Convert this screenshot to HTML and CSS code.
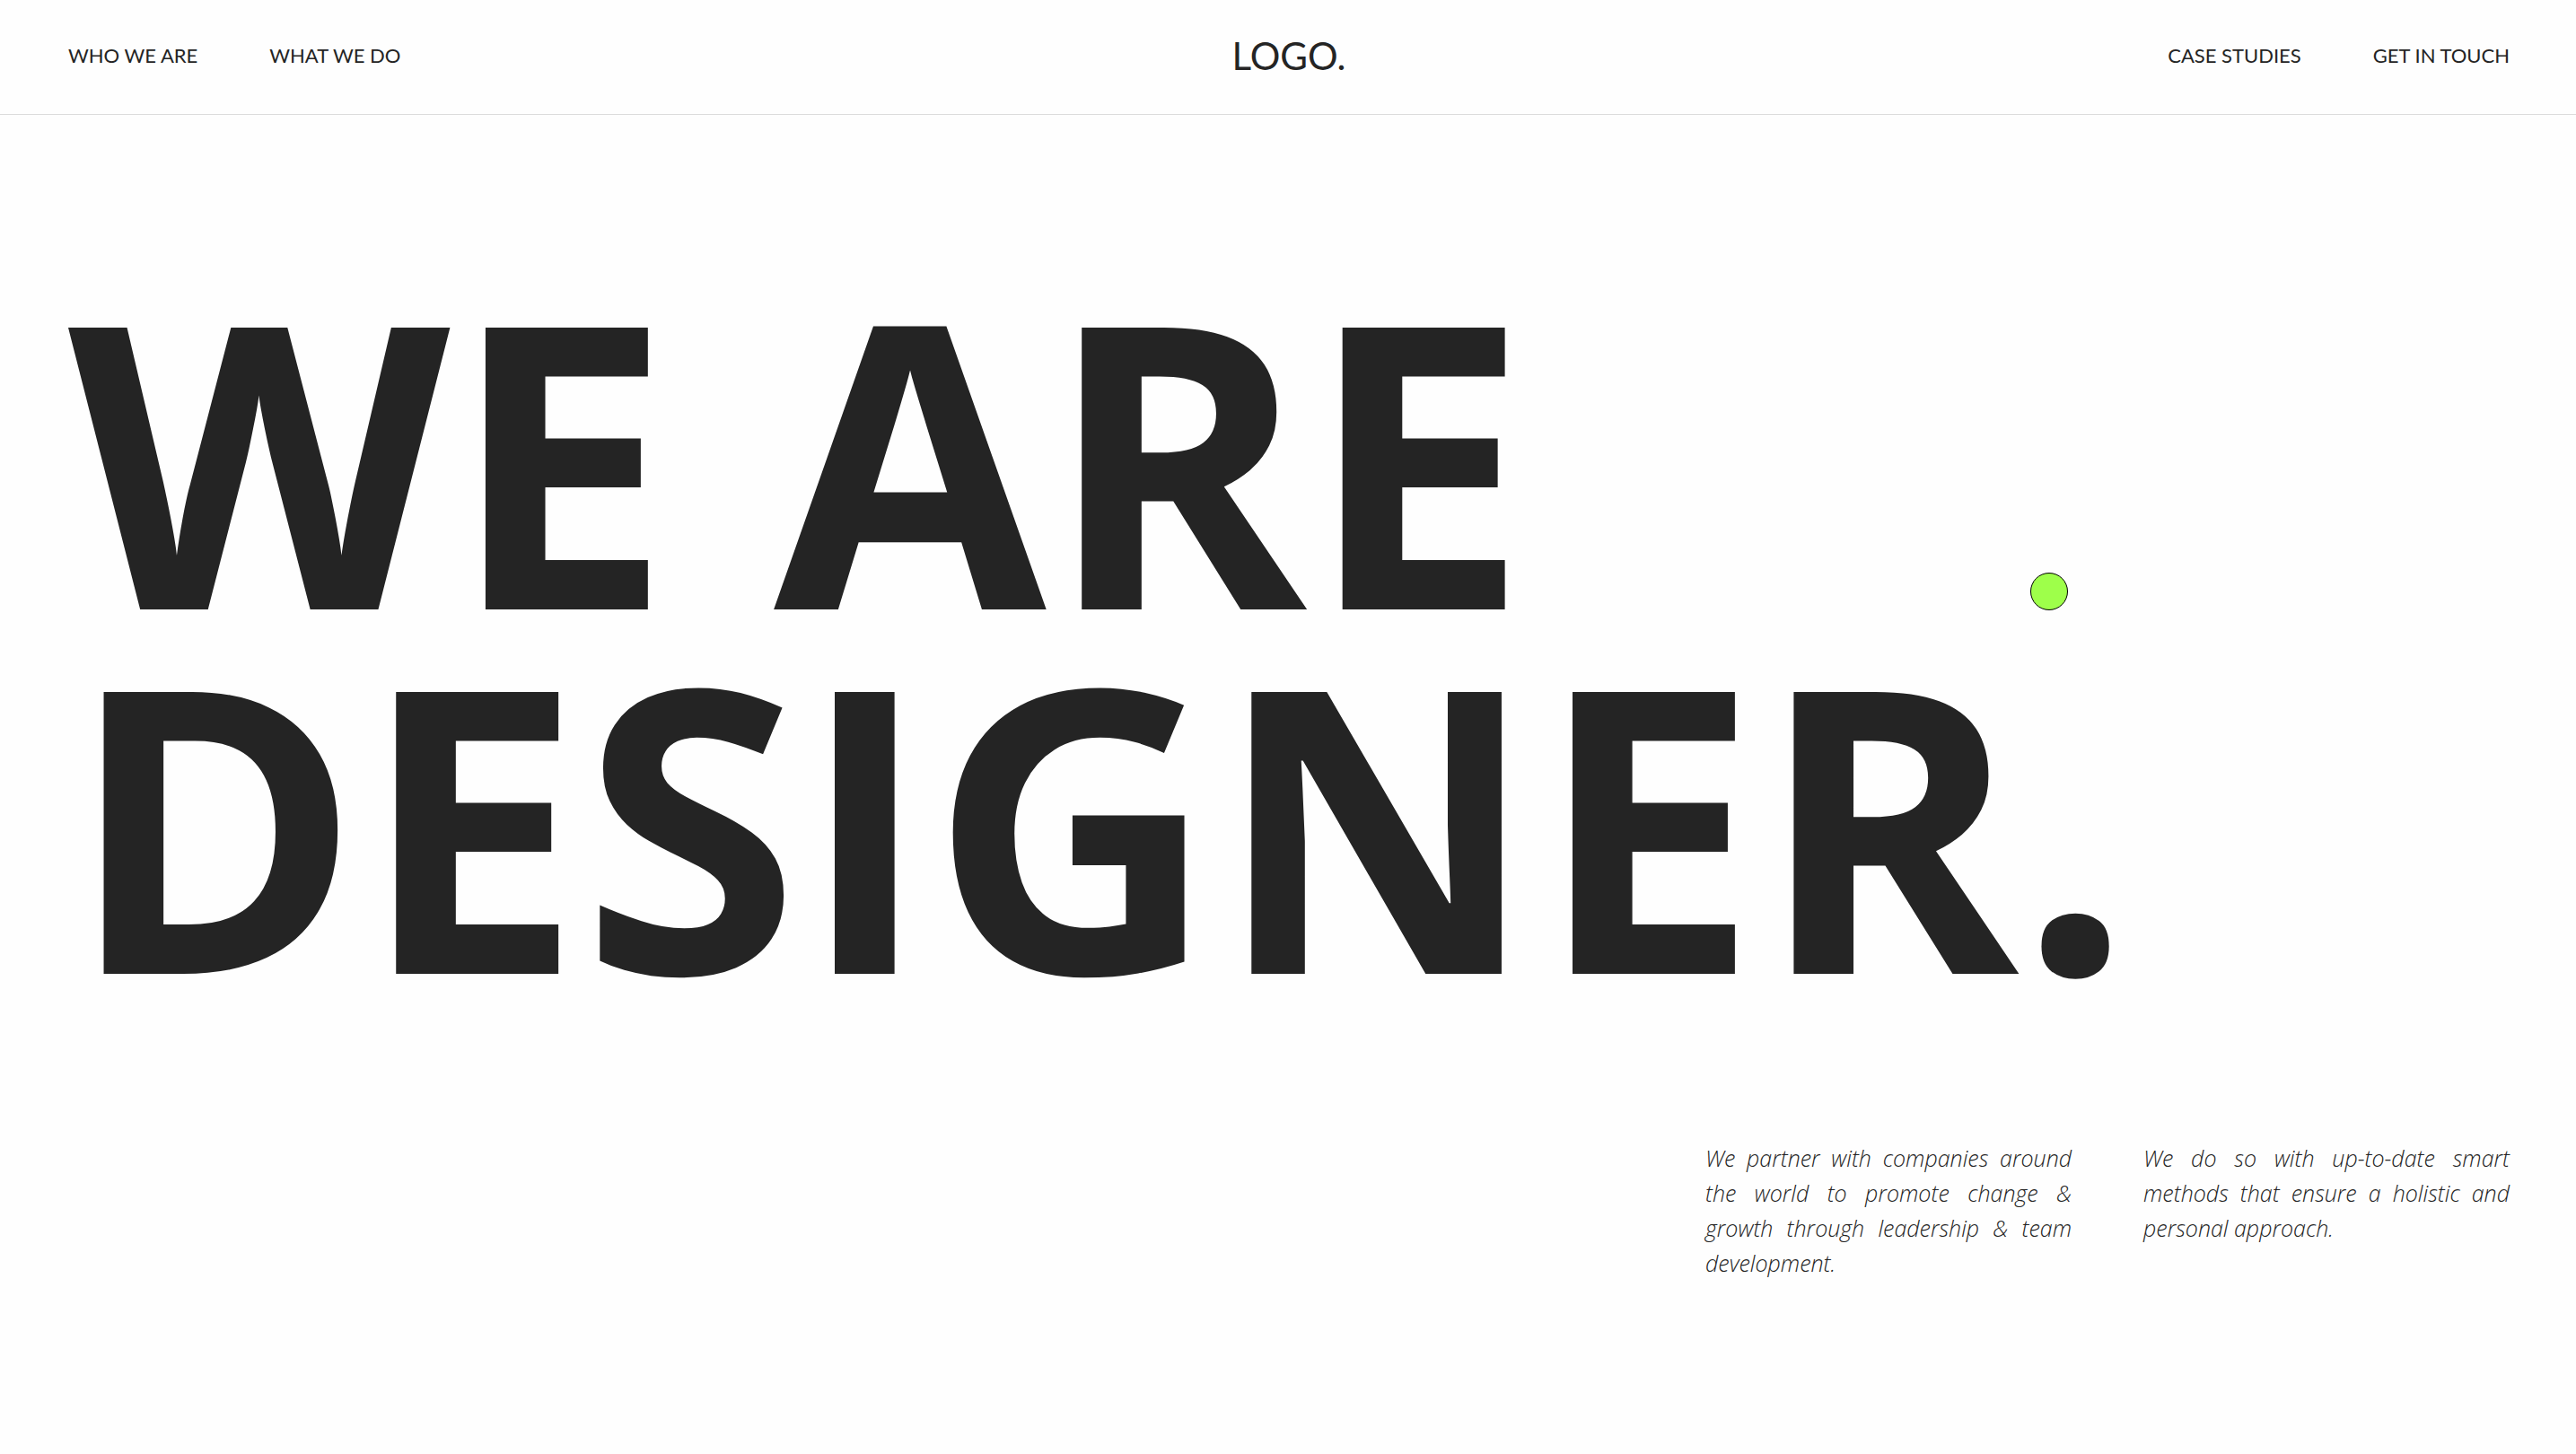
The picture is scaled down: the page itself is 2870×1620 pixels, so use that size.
FILE: index.html
```html
<!DOCTYPE html>
<html lang="en">
<head>
<meta charset="utf-8">
<meta name="viewport" content="width=device-width, initial-scale=1">
<title>Logo.</title>
<link rel="stylesheet" href="styles.css">
</head>
<body>
<header class="header">
  <nav class="nav" aria-label="About">
    <a class="nav-link" href="#who">WHO WE ARE</a>
    <a class="nav-link" href="#what">WHAT WE DO</a>
  </nav>
  <a class="logo" href="#home">LOGO.</a>
  <nav class="nav nav-end" aria-label="Work and contact">
    <a class="nav-link" href="#cases">CASE STUDIES</a>
    <a class="nav-link" href="#contact">GET IN TOUCH</a>
  </nav>
</header>
<main class="hero">
  <h1 class="title">WE ARE<br>DESIGNER.</h1>
  <div class="intro">
    <p class="intro-text">We partner with companies around the world to promote change &amp; growth through leadership &amp; team development.</p>
    <p class="intro-text">We do so with up-to-date smart methods that ensure a holistic and personal approach.</p>
  </div>
</main>
<div class="cursor" aria-hidden="true"></div>
</body>
</html>
```
FILE: styles.css
```css
* {
  box-sizing: border-box;
}

body {
  margin: 0;
  min-height: 100vh;
  background: #fefefe;
  color: #242424;
  font-family: "Open Sans", "Noto Sans", sans-serif;
}

.header {
  display: grid;
  grid-template-columns: 1fr auto 1fr;
  align-items: center;
  height: 128px;
  padding: 0 74px 4px 76px;
  border-bottom: 1px solid #dcdcdc;
  font-family: Lato, sans-serif;
}

.nav {
  display: flex;
  gap: 80px;
}

.nav-end {
  justify-content: flex-end;
}

.nav-link,
.logo {
  color: inherit;
  text-decoration: none;
  white-space: nowrap;
}

.nav-link {
  font-size: 22px;
}

.logo {
  font-size: 42px;
}

.hero {
  padding: 178px 74px 120px 76px;
}

.title {
  margin: 0;
  font-size: 440px;
  font-weight: 700;
  line-height: 406px;
  white-space: nowrap;
}

.intro {
  display: grid;
  grid-template-columns: repeat(2, 408px);
  justify-content: end;
  gap: 80px;
  margin-top: 153px;
}

.intro-text {
  margin: 0;
  font-size: 25px;
  font-style: italic;
  font-weight: 300;
  line-height: 39px;
  text-align: justify;
}

.cursor {
  position: absolute;
  left: 2262px;
  top: 638px;
  width: 42px;
  height: 42px;
  border: 1px solid #000;
  border-radius: 50%;
  background: #9eff4a;
  pointer-events: none;
}
```
